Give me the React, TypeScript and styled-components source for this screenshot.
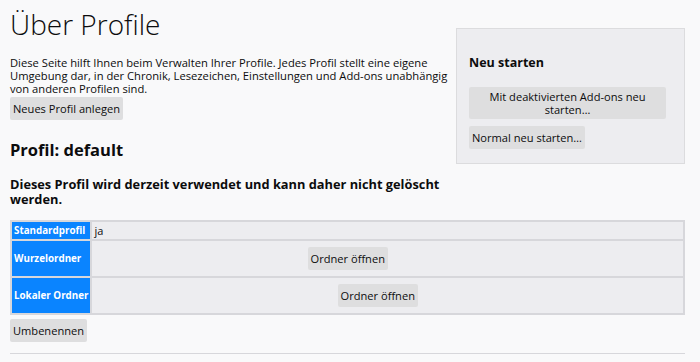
import styled, { createGlobalStyle } from "styled-components"

const GlobalStyle = createGlobalStyle`
  html, body {
    margin: 0;
    padding: 0;
    background: #f9f9fa;
    color: #0c0c0d;
    font-family: "Open Sans", "DejaVu Sans", sans-serif;
  }
`

const Page = styled.div`
  padding: 0 15px 8px 10px;
  display: grid;
  grid-template-columns: 1fr 229px;
  column-gap: 6px;
`

const Main = styled.main`
  display: flex;
  flex-direction: column;
  align-items: flex-start;
  min-width: 0;
`

const Title = styled.h1`
  margin: 6px 0 14px;
  font-size: 28px;
  font-weight: 300;
  line-height: 36px;
`

const Intro = styled.p`
  margin: 0 0 2px;
  font-size: 11.2px;
  line-height: 13px;
`

const Button = styled.button<{ $wide?: boolean }>`
  font-family: inherit;
  font-size: 11.1px;
  color: #0c0c0d;
  background: #dededf;
  border: none;
  border-radius: 2px;
  padding: ${(p) => (p.$wide ? "3px 8px" : "5px 3px")};
  line-height: 13px;
  width: ${(p) => (p.$wide ? "100%" : "auto")};
  cursor: pointer;
`

const ProfileTitle = styled.h2`
  margin: 19px 0 0;
  font-size: 16.5px;
  font-weight: 700;
  line-height: 22px;
`

const Notice = styled.h3`
  margin: 16px 0 0;
  font-size: 12.8px;
  font-weight: 700;
  line-height: 15px;
`

const Side = styled.aside`
  margin-top: 28px;
  align-self: start;
  background: #ededf0;
  border: 1px solid #dcdcde;
  padding: 26px 18px 14px 12px;
  display: flex;
  flex-direction: column;
  align-items: flex-start;
  gap: 7px;
`

const SideTitle = styled.h3`
  margin: 0 0 9px;
  font-size: 12.5px;
  font-weight: 700;
  line-height: 16px;
`

const Full = styled.div`
  grid-column: 1 / -1;
  display: flex;
  flex-direction: column;
  align-items: flex-start;
`

const Table = styled.table`
  width: 100%;
  margin-top: 13px;
  border-collapse: separate;
  border-spacing: 2px;
  background: #d7d7db;
  font-size: 11px;
`

const Th = styled.th`
  background: #0a84ff;
  color: #fff;
  font-size: 9.8px;
  font-weight: 700;
  text-align: left;
  padding: 0 1px 0 2px;
  width: 73px;
  white-space: nowrap;
  height: 17px;
`

const Td = styled.td<{ $tall?: boolean; $shift?: number }>`
  background: #ededf0;
  padding: 0 ${(p) => p.$shift ?? 0}px 0 3px;
  height: ${(p) => (p.$tall ? "35px" : "17px")};
  text-align: ${(p) => (p.$tall ? "center" : "left")};
`

const Rename = styled(Button)`
  margin-top: 4px;
  padding: 5px 3px;
`

const Rule = styled.hr`
  width: 100%;
  border: none;
  border-top: 1px solid #d7d7db;
  margin: 11px 0 0;
`

const rows = [
  { label: "Wurzelordner", shift: 82 },
  { label: "Lokaler Ordner", shift: 22 },
]

export default function App() {
  return (
    <>
      <GlobalStyle />
      <Page>
        <Main>
          <Title>Über Profile</Title>
          <Intro>
            Diese Seite hilft Ihnen beim Verwalten Ihrer Profile. Jedes Profil stellt eine eigene
            Umgebung dar, in der Chronik, Lesezeichen, Einstellungen und Add-ons unabhängig
            von anderen Profilen sind.
          </Intro>
          <Button>Neues Profil anlegen</Button>
          <ProfileTitle>Profil: default</ProfileTitle>
          <Notice>Dieses Profil wird derzeit verwendet und kann daher nicht gelöscht werden.</Notice>
        </Main>
        <Side>
          <SideTitle>Neu starten</SideTitle>
          <Button $wide>Mit deaktivierten Add-ons neu starten…</Button>
          <Button>Normal neu starten…</Button>
        </Side>
        <Full>
          <Table>
            <tbody>
              <tr>
                <Th>Standardprofil</Th>
                <Td>ja</Td>
              </tr>
              {rows.map((r) => (
                <tr key={r.label}>
                  <Th>{r.label}</Th>
                  <Td $tall $shift={r.shift}>
                    <Button>Ordner öffnen</Button>
                  </Td>
                </tr>
              ))}
            </tbody>
          </Table>
          <Rename>Umbenennen</Rename>
          <Rule />
        </Full>
      </Page>
    </>
  )
}
